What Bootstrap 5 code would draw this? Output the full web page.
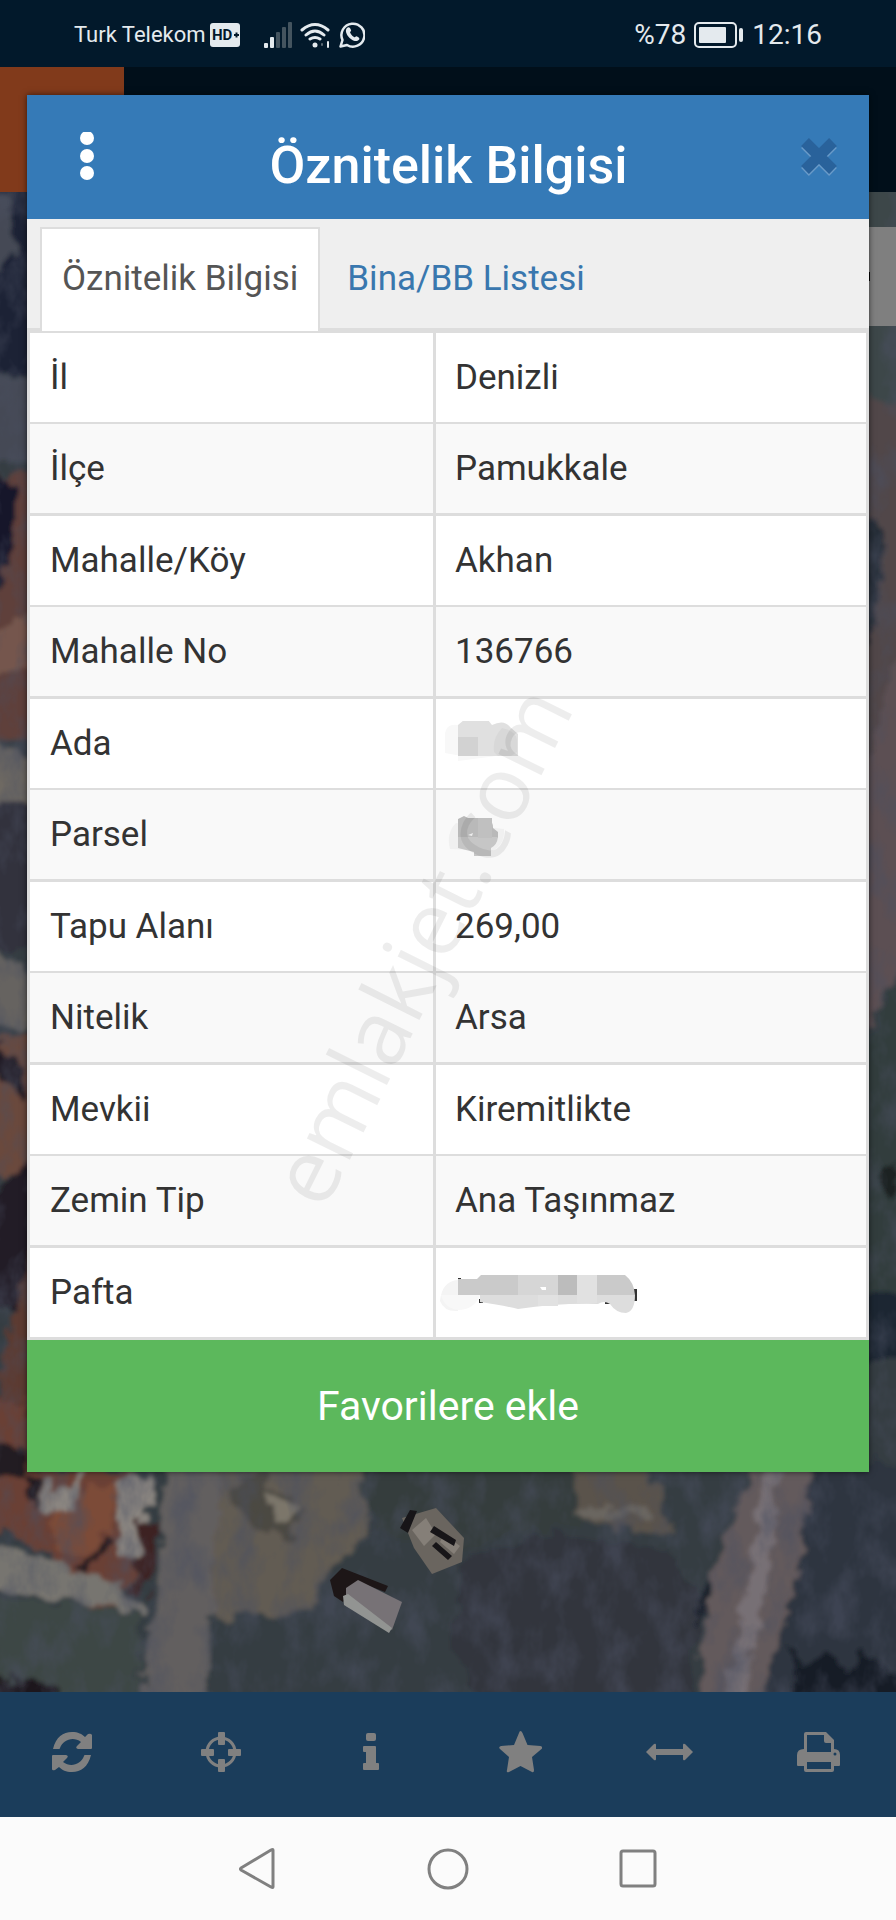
<!DOCTYPE html>
<html lang="tr">
<head>
<meta charset="utf-8">
<meta name="viewport" content="width=device-width, initial-scale=1">
<title>Öznitelik Bilgisi</title>
<link href="https://cdn.jsdelivr.net/npm/bootstrap@5.3.0/dist/css/bootstrap.min.css" rel="stylesheet">
<style>
  body { font-family: Roboto, "Noto Sans", sans-serif; background: #fbfbfb; color: #333; }
  svg { display: block; }
  .phone-status { background: #02192b; color: #e4eaee; height: 67px; padding: 2px 74px 0; }
  .carrier { font-size: 22px; line-height: 28px; }
  .clock-text { font-size: 28px; line-height: 36px; }

  /* map page and dialog share one grid cell */
  .stage { display: grid; grid-template: 1fr / minmax(0, 1fr); }
  .scene, .dialog-layer { grid-area: 1 / 1; min-width: 0; }
  .app-header { background: #010f1a; height: 125px; }
  .app-header-tile { background: #813a1b; width: 124px; height: 125px; }
  .map-area { background: #343e42; }
  .map-art { position: absolute; inset: 0; width: 100%; height: 100%; }
  .map-control { background: #7f7f7f; width: 64px; height: 99px; margin-top: 35px; padding-left: 30px; }
  .map-control span { background: #000; width: 8px; height: 9px; }

  .dialog-layer { padding: 28px 27px 220px; }
  .dialog-box { box-shadow: 0 0 6px rgba(0, 0, 0, .6); background: #fff; z-index: 1; }
  .dialog-head { background: #357ab7; color: #fff; height: 124px; padding: 0 32px 0 43px; }
  .dialog-head h1 { font-size: 52px; line-height: 64px; padding-top: 18px; }
  .icon-btn { background: none; border: 0; padding: 0; color: inherit; }
  .menu-btn { width: 34px; }
  .tab-strip { background: #efefef; border-bottom: 3px solid #ddd; padding: 8px 13px 0; font-size: 35px; line-height: 40px; }
  .tab-strip .nav-item { margin-bottom: -3px; }
  .tab-strip .nav-link { border: 2px solid transparent; border-bottom: 0; border-radius: 0; margin: 0; padding: 30px 20px 32px; color: #3977ae; }
  .tab-strip .nav-link.active { border-color: #ddd; background: #fff; color: #555; }
  .tab-strip .nav-item + .nav-item { margin-left: 5px; }

  .parcel-table { border-collapse: separate; border-spacing: 0; border: 3px solid #ddd; border-width: 2px 3px 0; color: #333; font-size: 35px; line-height: 45px; }
  .parcel-table th, .parcel-table td { border: 0 solid #ddd; border-bottom-width: 2px; padding: 22px 19px; font-weight: 400; background: #fff; box-shadow: none; }
  .parcel-table th { width: 406px; border-right-width: 3px; padding-left: 20px; }
  .parcel-table tr:nth-child(even) > *, .parcel-table tr:last-child > * { border-bottom-width: 3px; }
  .parcel-table tr:nth-child(even) > * { background: #f9f9f9; }
  .hidden-value { height: 45px; margin-left: -11px; }
  .stamp { position: absolute; inset: 0; width: 100%; height: 100%; pointer-events: none; }
  .stamp text { font-family: "Open Sans", sans-serif; font-size: 90px; fill: #000; fill-opacity: .07; }
  .favorite-btn { background: #5cb85c; color: #fff; border: 0; border-radius: 0; font-size: 41px; line-height: 48px; padding: 42px 0; }

  .tool-bar { background: #1b3d5b; color: #808080; height: 125px; padding-bottom: 5px; }
  .tool-bar .icon-btn { margin-right: 5px; }
  .phone-nav { height: 103px; gap: 149px; color: #808080; background: #fbfbfb; }
</style>
</head>
<body>
<div class="d-flex flex-column min-vh-100">

  <header class="phone-status d-flex align-items-center justify-content-between">
    <div class="d-flex align-items-center">
      <span class="carrier">Turk Telekom</span>
      <svg class="ms-1" width="30" height="26" viewBox="0 0 30 26"><rect y="1" width="30" height="24" rx="3" fill="#e4eaee"/><text x="2" y="18" font-size="15" font-weight="700" fill="#02192b">HD</text><path d="M24 13h5M26.500 10.500v5" stroke="#02192b" stroke-width="2"/></svg>
      <svg class="ms-4" width="28" height="26" viewBox="0 0 28 26"><g fill="#e4eaee"><rect y="21" width="4" height="5" rx="1"/><rect x="6" y="15" width="4" height="11" rx="1"/></g><g fill="#44545f"><rect x="12" y="10" width="4" height="16" rx="1"/><rect x="18" y="5" width="4" height="21" rx="1"/><rect x="24" width="4" height="26" rx="1"/></g></svg>
      <svg class="ms-2" width="31" height="26" viewBox="0 0 31 26" fill="none" stroke="#e4eaee" stroke-width="3" stroke-linecap="round"><path d="M2 8Q15 -3 28 8M6 13Q15 5 24 13M10 17Q15 14 20 17"/><circle cx="15" cy="23" r="2.500" fill="#e4eaee" stroke="none"/><path d="M28 20v5" stroke-width="2"/><path d="M22 22v1" stroke="#5b6973" stroke-width="2"/></svg>
      <svg class="ms-2" width="26" height="26" viewBox="0 0 26 26"><path d="M1.500 24.500l2-6.500A11.500 11.500 0 1 1 8 23z" fill="none" stroke="#e4eaee" stroke-width="2.500" stroke-linejoin="round"/><path d="M8 6c-4 4 4 14 10 13 3-1 3-3 1-4-3-2-2 1-4 0-2-1-4-4-4-5 2-1 1-2 0-4-1-1-2-1-3 0z" fill="#e4eaee"/></svg>
    </div>
    <div class="d-flex align-items-center clock-text">
      <span>%78</span>
      <svg class="ms-2 me-2" width="50" height="28" viewBox="0 0 50 28"><rect x="1" y="2" width="41" height="24" rx="4" fill="none" stroke="#e4eaee" stroke-width="2"/><rect x="5" y="6" width="27" height="16" rx="1" fill="#e4eaee"/><rect x="45" y="7" width="4" height="14" rx="2" fill="#e4eaee"/></svg>
      <span>12:16</span>
    </div>
  </header>

  <main class="stage flex-grow-1">
    <div class="scene d-flex flex-column">
      <div class="app-header"><div class="app-header-tile"></div></div>
      <div class="map-area position-relative flex-grow-1 d-flex justify-content-end align-items-start">
        <svg class="map-art" viewBox="0 192 896 1500" preserveAspectRatio="xMidYMid slice" aria-hidden="true">
          <defs>
            <filter id="soft" x="-5%" y="-5%" width="110%" height="110%"><feTurbulence type="fractalNoise" baseFrequency=".05" numOctaves="3" seed="4" result="n"/><feDisplacementMap in="SourceGraphic" in2="n" scale="26" xChannelSelector="R" yChannelSelector="G"/><feGaussianBlur stdDeviation="2"/></filter>
            <filter id="grain" x="0" y="0" width="100%" height="100%"><feTurbulence type="fractalNoise" baseFrequency=".035 .022" numOctaves="4" seed="8"/><feColorMatrix values="0 0 0 0 .07  0 0 0 0 .08  0 0 0 0 .12  2.400 0 0 0 -1"/></filter>
          </defs>
          <path fill="#343e42" d="M0 192h896v1500H0z"/>
          <g filter="url(#soft)">
            <path fill="#343e42" d="M-30 160h956v1560H-30z"/>
            <!-- left edge: trees, roofs, streets -->
            <path fill="#1a2136" d="M-20 180h60v194h-60z"/>
            <path fill="#454a55" d="M-20 192h30l6 60-16 20h-20zM-20 374l60 4v84h-60z"/>
            <path fill="#5f3f3a" d="M-20 475h60v265h-60z"/>
            <path fill="#15162a" d="M-20 470l34 10v60l-14 50h-20z"/>
            <path fill="#75574e" d="M-20 634l60-26v60l-60 12z"/>
            <path fill="#6e6962" d="M-20 740l60 16v46h-60z"/>
            <path fill="#30323d" d="M-20 802h60v145h-60z"/>
            <path fill="#666460" d="M-20 940l60 37v50h-60z"/>
            <path fill="#6b4a3e" d="M-20 1035h60v140h-60z"/>
            <path fill="#221c25" d="M-20 1040h20l24 30v30L0 1080h-20zM-20 1210l60-60v160h-60z"/>
            <path fill="#5c3a33" d="M6 1340l34-110v260h-60z"/>
            <path fill="#6a4136" d="M-20 1400h47v70h110l6 50-10 60-30 50-58-80-65-30z"/>
            <path fill="#7c4b39" d="M62 1496l57-18-12 58-22 20-33-10z"/>
            <path fill="#241a20" d="M-20 1440l47 13v22h-47zM28 1472l14 4-4 30-10-6zM84 1562l26-24v8l-24 26z"/>
            <path fill="#8a8580" d="M42 1482l8-2 4 20 22-26 6 2-12 36-30-6zM116 1480l38-4 4 34-14-4-8 54-18-4z"/>
            <path fill="#3d2424" d="M140 1518l20 2-14 74h-12z"/>
            <path fill="#77746f" d="M-20 1552l54 2 86 28 24 30-12 1-152-27z"/>
            <path fill="#3d4644" d="M-20 1594l160 22v96H-20z"/>
            <path fill="#1f181b" d="M-20 1674l78 10 10 28h-88z"/>
            <!-- dirt road and field -->
            <path fill="#625f5e" d="M164 1460h66l-12 112-14 140h-66l22-160z"/>
            <path fill="#625b53" d="M226 1460h136l6 72-38 40-22 42-92 4-6-30z"/>
            <path fill="#4c4943" d="M232 1482l30-8 40 38-8 28-30-10-30-20z"/>
            <path fill="#7c766b" d="M270 1492l28 16-6 20-20-6z"/>
            <path fill="#353e3d" d="M362 1460h210l20 62-80 12-58 20-60-16-28-34z"/>
            <path fill="#5a534c" d="M568 1460h80l26 72-18 2-74-12z"/>
            <path fill="#6b6660" d="M578 1508l72-2 2 12-68 1z"/>
            <!-- grass and scrub -->
            <path fill="#30353e" d="M466 1560l80-28 120 16 40 60-20 104H480l-30-80z"/>
            <path fill="#635a5c" d="M752 1460h56l-8 112-42 140h-62l18-140z"/>
            <path fill="#777075" d="M768 1460h15l-14 122-30 130h-15l22-130z"/>
            <path fill="#2e363f" d="M808 1460h110v250H760l38-138z"/>
            <path fill="#161a25" d="M790 1640l14 30 20-20 20 22 20-20 50 40v20H786zM700 1590l12-10-4 30-10 20z"/>
            <!-- right edge -->
            <path fill="#3c4648" d="M850 180h66v222h-66z"/>
            <path fill="#51474a" d="M850 400h66v370h-66z"/>
            <path fill="#252d39" d="M850 510l36 20-10 100-26 20z"/>
            <path fill="#5c5052" d="M916 600v340l-66 120V820z"/>
            <path fill="#333e3e" d="M850 1080l66-140v380h-66z"/>
            <path fill="#1a2533" d="M850 1300l66-10v60l-66 20z"/>
            <path fill="#1d2422" d="M880 1180l16-20v20l-14 16z"/>
          </g>
          <rect y="192" width="896" height="1500" filter="url(#grain)" opacity=".55"/>
          <!-- small building and shed -->
          <path fill="#6a655f" d="M402 1518l34-10 28 30-2 24-30 12-18-26z"/>
          <path fill="#857f78" d="M412 1530l14-12 10 16-12 12zM444 1534l16 12-6 8-14-12z"/>
          <path fill="#171518" d="M400 1528l10-18 7 1-9 22zM434 1526l22 14-2 6-24-14zM436 1542l16 14-4 4-16-14z"/>
          <path fill="#1d1617" d="M334 1596l-4-16 12-12 46 18-3 6-26-10-16 20z"/>
          <path fill="#777276" d="M346 1588l12-8 44 22-10 28-46-24z"/>
          <path fill="#929492" d="M343 1596l5-2 44 34-3 5-45-28z"/>
        </svg>
        <div class="map-control position-relative d-flex align-items-center"><span></span></div>
      </div>
    </div>

    <div class="dialog-layer d-flex flex-column">
      <section class="dialog-box" role="dialog" aria-labelledby="dialogTitle">
        <div class="dialog-head d-flex align-items-center justify-content-between">
          <button class="icon-btn menu-btn d-flex justify-content-center" type="button" aria-label="Menü">
            <svg width="14" height="50" viewBox="0 0 14 50" fill="currentColor"><circle cx="7" cy="6" r="7"/><circle cx="7" cy="24" r="7"/><circle cx="7" cy="41" r="7"/></svg>
          </button>
          <h1 class="fw-medium m-0 pe-2" id="dialogTitle">Öznitelik Bilgisi</h1>
          <button class="icon-btn" type="button" aria-label="Kapat">
            <svg width="36" height="38" viewBox="0 0 36 38" stroke-width="11"><path d="M4 6l28 28M32 6L4 34" stroke="#6a9bc9"/><path d="M4 4l28 28M32 4L4 32" stroke="#29629b"/></svg>
          </button>
        </div>
        <ul class="nav nav-tabs tab-strip">
          <li class="nav-item"><a class="nav-link active" href="#oznitelik" aria-current="page">Öznitelik Bilgisi</a></li>
          <li class="nav-item"><a class="nav-link" href="#bina">Bina/BB Listesi</a></li>
        </ul>
        <div class="position-relative" id="oznitelik">
          <table class="table parcel-table m-0">
            <tbody>
              <tr><th scope="row">İl</th><td>Denizli</td></tr>
              <tr><th scope="row">İlçe</th><td>Pamukkale</td></tr>
              <tr><th scope="row">Mahalle/Köy</th><td>Akhan</td></tr>
              <tr><th scope="row">Mahalle No</th><td>136766</td></tr>
              <tr><th scope="row">Ada</th><td>
                <svg class="hidden-value" width="80" height="45" viewBox="0 2 80 45" role="img" aria-label="Gizli"><path fill="#f8f8f8" d="M1 14Q3 4 14 6V42L60 36H12L1 34z"/><path fill="#e0e0e0" d="M14 6l6-5h24l4 5q12-6 18 2l8 7v22H14z"/><path fill="#d2d2d2" d="M14 18h20v19H14z"/><path fill="#d8d8d8" d="M50 33q-2-14 8-24 14 3 15 12v12l-6 4H54z"/></svg></td></tr>
              <tr><th scope="row">Parsel</th><td>
                <svg class="hidden-value" width="80" height="45" viewBox="0 -3 80 45" role="img" aria-label="Gizli"><path fill="#f0f0f0" d="M6 34Q2 18 12 8l48 6q1 16-12 22z"/><path fill="#b9b9b9" d="M14 4l6-3 4 2h20q5 3 5 10l5 4v6H14z"/><path fill="#c6c6c6" d="M14 22h40q-1 8-7 11v8H30v-4l-16-4z"/><path fill="#c0c0c0" d="M34 3h14v20H34z"/><path fill="#eee" d="M24 20l5-2-1 3z"/></svg></td></tr>
              <tr><th scope="row">Tapu Alanı</th><td>269,00</td></tr>
              <tr><th scope="row">Nitelik</th><td>Arsa</td></tr>
              <tr><th scope="row">Mevkii</th><td>Kiremitlikte</td></tr>
              <tr><th scope="row">Zemin Tip</th><td>Ana Taşınmaz</td></tr>
              <tr><th scope="row">Pafta</th><td>
                <svg class="hidden-value overflow-visible" width="202" height="45" viewBox="0 -1 202 45" role="img" aria-label="Gizli"><path fill="#333" d="M14 7h3v4h-3zM35 28h4v4h-4zM161 29h6v4h-6zM190 18h3v12h-3z"/><path fill="#f4f4f4" d="M-4 30Q-2 10 14 9v31q-14 1-18-10z"/><path fill="#f8f8f8" d="M-3 24h39q-6 15-22 15-14-2-17-15z"/><path fill="#ddd" d="M36 24h155q0 16-9 18-10 0-16-9-6-4-12 0-40-1-80 5Q58 34 36 31z"/><path fill="#cacaca" d="M14 8h19l4-4h144q9 7 10 20H14z"/><path fill="#d6d6d6" d="M74 4h40v20H74z"/><path fill="#bcbcbc" d="M114 4h19v20h-19z"/><path fill="#e1e1e1" d="M133 4h20v28h-20zM94 24h20v11H94z"/><path fill="#fff" d="M96 16h6v3h-4z"/></svg></td></tr>
            </tbody>
          </table>
          <svg class="stamp" viewBox="0 0 842 1008"><text transform="translate(402 618) rotate(-63.500)" y="23" text-anchor="middle">emlakjet.com</text></svg>
        </div>
        <button class="favorite-btn btn w-100 d-block" type="button">Favorilere ekle</button>
      </section>
    </div>
  </main>

  <nav class="tool-bar d-flex align-items-center" aria-label="Harita araçları">
    <div class="row g-0 w-100">
      <div class="col-2 d-flex justify-content-center"><button class="icon-btn" type="button" aria-label="Yenile"><svg width="40" height="40" viewBox="0 0 40 40" fill="currentColor"><path d="M1 17C4 5 11 0 20 0c6 0 10 2 13 5l3-3q3-1 4 1v13q0 1-1 1H26q-3-1-1-3l4-4C21 4 11 8 8 16q0 1-1 1z"/><path d="M39 23C36 35 29 40 20 40c-6 0-10-2-13-5l-4 3q-3 1-3-1V24q0-1 1-1h13q3 1 1 3l-4 4c8 6 18 2 21-6q0-1 1-1z"/></svg></button></div>
      <div class="col-2 d-flex justify-content-center"><button class="icon-btn" type="button" aria-label="Konum"><svg width="40" height="40" viewBox="0 0 40 40" fill="currentColor"><circle cx="20" cy="20" r="14" fill="none" stroke="currentColor" stroke-width="3"/><rect x="17" width="7" height="13" rx="1"/><rect x="17" y="27" width="7" height="13" rx="1"/><rect y="17" width="13" height="7" rx="1"/><rect x="27" y="17" width="13" height="7" rx="1"/></svg></button></div>
      <div class="col-2 d-flex justify-content-center"><button class="icon-btn" type="button" aria-label="Bilgi"><svg width="16" height="40" viewBox="0 0 16 40" fill="currentColor"><rect x="3" y="1" width="10" height="8" rx="2"/><path d="M1 14h11q1 0 1 1v16h2q1 0 1 1v5q0 1-1 1H1q-1 0-1-1v-5q0-1 1-1h2V20H1q-1 0-1-1v-4q0-1 1-1z"/></svg></button></div>
      <div class="col-2 d-flex justify-content-center"><button class="icon-btn" type="button" aria-label="Favoriler"><svg width="43" height="42" viewBox="0 0 43 42" fill="currentColor"><path d="M21.500 0q1 0 2 2l5 12 13 1q3 1 1 3L33 26l2 13q0 3-2 2l-11.500-6L10 41q-3 1-2-2l2-13L1 18q-2-2 1-3l13-1 5-12q.500-2 1.500-2z"/></svg></button></div>
      <div class="col-2 d-flex justify-content-center"><button class="icon-btn" type="button" aria-label="Ölç"><svg width="47" height="40" viewBox="0 0 47 40" fill="currentColor"><path d="M0 20l8-8q2-1 2 1v4h27v-4q0-2 2-1l8 8-8 8q-2 1-2-1v-4H10v4q0 2-2 1z"/></svg></button></div>
      <div class="col-2 d-flex justify-content-center"><button class="icon-btn" type="button" aria-label="Yazdır"><svg width="43" height="40" viewBox="0 0 43 40"><path fill="currentColor" fill-rule="evenodd" d="M9 0h20l8 8v9q6 0 6 6v10q0 1-1 1h-5v4q0 2-2 2H9q-2 0-2-2v-4H1q-1 0-1-1V23q0-6 7-6V2q0-2 2-2zM10 3v17h24V11h-5q-2 0-2-2V3zM10 30v7h24v-7z"/><circle cx="38" cy="22" r="1.500" fill="#1b3d5b"/></svg></button></div>
    </div>
  </nav>

  <nav class="phone-nav d-flex align-items-center justify-content-center" aria-label="Sistem">
    <button class="icon-btn" type="button" aria-label="Geri"><svg width="42" height="42" viewBox="0 0 42 42" fill="none" stroke="currentColor" stroke-width="3" stroke-linejoin="round"><path d="M37 2v37q0 1-2 0L5 22q-1-1 0-2L35 2q2-1 2 0z"/></svg></button>
    <button class="icon-btn" type="button" aria-label="Ana ekran"><svg width="42" height="42" viewBox="0 0 42 42" fill="none" stroke="currentColor" stroke-width="3"><circle cx="21" cy="21" r="19"/></svg></button>
    <button class="icon-btn" type="button" aria-label="Son uygulamalar"><svg width="42" height="42" viewBox="0 0 42 42" fill="none" stroke="currentColor" stroke-width="3"><rect x="3" y="3" width="34" height="35" rx="2"/></svg></button>
  </nav>
</div>
<script src="https://cdn.jsdelivr.net/npm/bootstrap@5.3.0/dist/js/bootstrap.bundle.min.js"></script>
</body>
</html>
